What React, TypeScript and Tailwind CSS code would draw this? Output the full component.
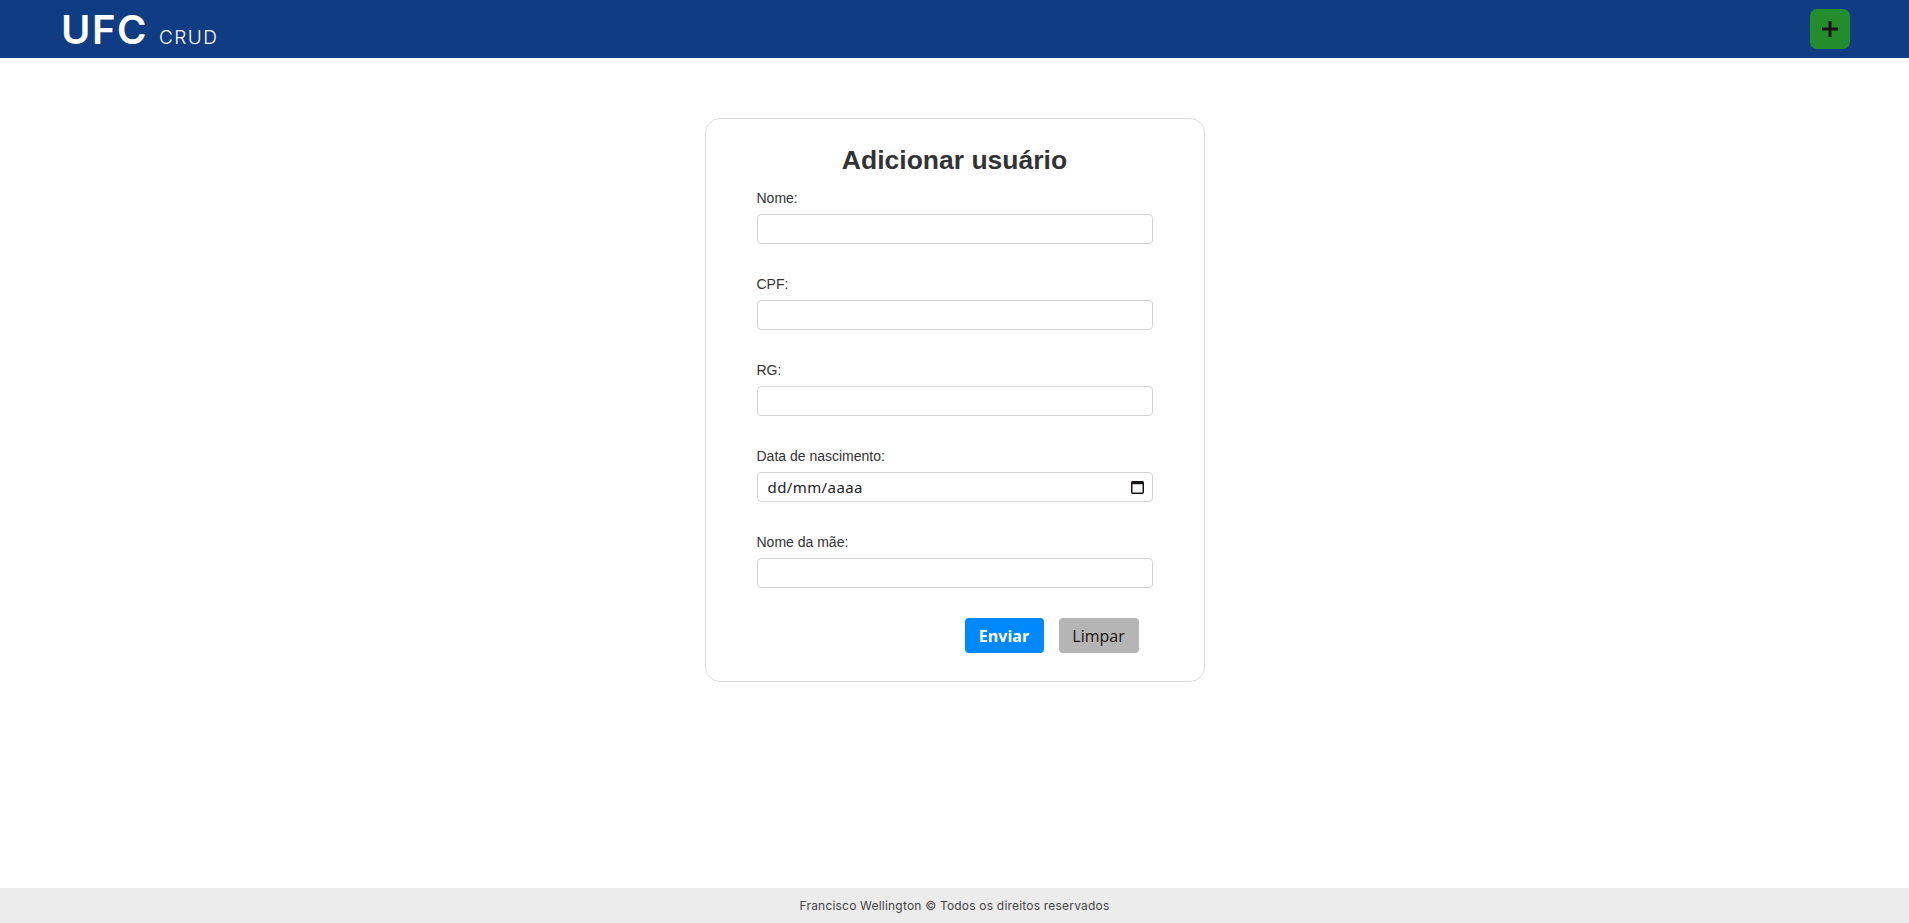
import React from 'react';

const fields = [
  { id: 'nome', label: 'Nome:', type: 'text' },
  { id: 'cpf', label: 'CPF:', type: 'text' },
  { id: 'rg', label: 'RG:', type: 'text' },
  { id: 'nascimento', label: 'Data de nascimento:', type: 'date' },
  { id: 'mae', label: 'Nome da mãe:', type: 'text' },
];

const inputClass =
  "block w-full h-[30px] border border-[#d3d3d3] rounded-[4px] bg-white px-[10px] text-[16px] text-[#222] outline-none font-['Noto_Sans',sans-serif]";

const CalendarIcon = () => (
  <svg width="13" height="14" viewBox="0 0 13 14" className="absolute right-[9px] top-[8px] pointer-events-none">
    <rect x="0.75" y="1.75" width="11.5" height="11.5" rx="1" fill="none" stroke="#1a1212" strokeWidth="1.5" />
    <rect x="0.75" y="1.75" width="11.5" height="2.5" fill="#1a1212" />
  </svg>
);

export default function App() {
  return (
    <div className="min-h-screen flex flex-col bg-white font-['Liberation_Sans',Arial,sans-serif]">
      {/* Header */}
      <header className="h-[58px] bg-[#0f3c83] flex items-center justify-between pl-[61px] pr-[59px]">
        <div className="flex items-baseline gap-[11px] text-white font-['Inter',sans-serif] pt-[2px]">
          <span className="text-[40px] font-semibold leading-none tracking-[1.5px]">UFC</span>
          <span className="text-[19px] font-light leading-none tracking-[1.5px]">CRUD</span>
        </div>
        <button className="w-[40px] h-[40px] rounded-[7px] bg-[#238c2c] flex items-center justify-center">
          <svg width="16" height="16" viewBox="0 0 16 16">
            <rect x="6.5" y="0" width="3" height="16" fill="#1a1212" />
            <rect x="0" y="6.5" width="16" height="3" fill="#1a1212" />
          </svg>
        </button>
      </header>

      {/* Main */}
      <main className="flex-1">
        <div className="mx-auto mt-[60px] w-[500px] border border-[#dcdcdc] rounded-[15px] px-[51px] pt-[25px] pb-[28px]">
          <h2 className="text-center text-[26.5px] leading-[32px] font-bold text-[#333] mb-[14px]">
            Adicionar usuário
          </h2>
          <form onSubmit={e => e.preventDefault()}>
            {fields.map((f, i) => (
              <div key={f.id} className={i < fields.length - 1 ? 'mb-[32px]' : ''}>
                <label htmlFor={f.id} className="block h-[16px] leading-[16px] text-[14px] text-[#333] mb-[8px]">
                  {f.label}
                </label>
                {f.type === 'date' ? (
                  <div className="relative">
                    <input
                      id={f.id}
                      type="text"
                      placeholder="dd/mm/aaaa"
                      className={inputClass + ' !text-[15px] tracking-[0.4px] placeholder:text-[#222]'}
                    />
                    <CalendarIcon />
                  </div>
                ) : (
                  <input id={f.id} type={f.type} className={inputClass} />
                )}
              </div>
            ))}
            <div className="flex justify-end gap-[15px] pr-[14px] mt-[30px]">
              <button
                type="submit"
                className="w-[79px] h-[35px] rounded-[4px] bg-[#0089ff] text-white text-[16px] font-bold font-['Open_Sans',sans-serif]"
              >
                Enviar
              </button>
              <button
                type="reset"
                className="w-[80px] h-[35px] rounded-[4px] bg-[#b5b5b5] text-[#1a1212] text-[16px] font-['Open_Sans',sans-serif]"
              >
                Limpar
              </button>
            </div>
          </form>
        </div>
      </main>

      {/* Footer */}
      <footer className="h-[35px] bg-[#ececec] flex items-center justify-center">
        <p className="text-[12px] text-[#444] tracking-[0.2px] font-['Inter',sans-serif]">
          Francisco Wellington © Todos os direitos reservados
        </p>
      </footer>
    </div>
  );
}
